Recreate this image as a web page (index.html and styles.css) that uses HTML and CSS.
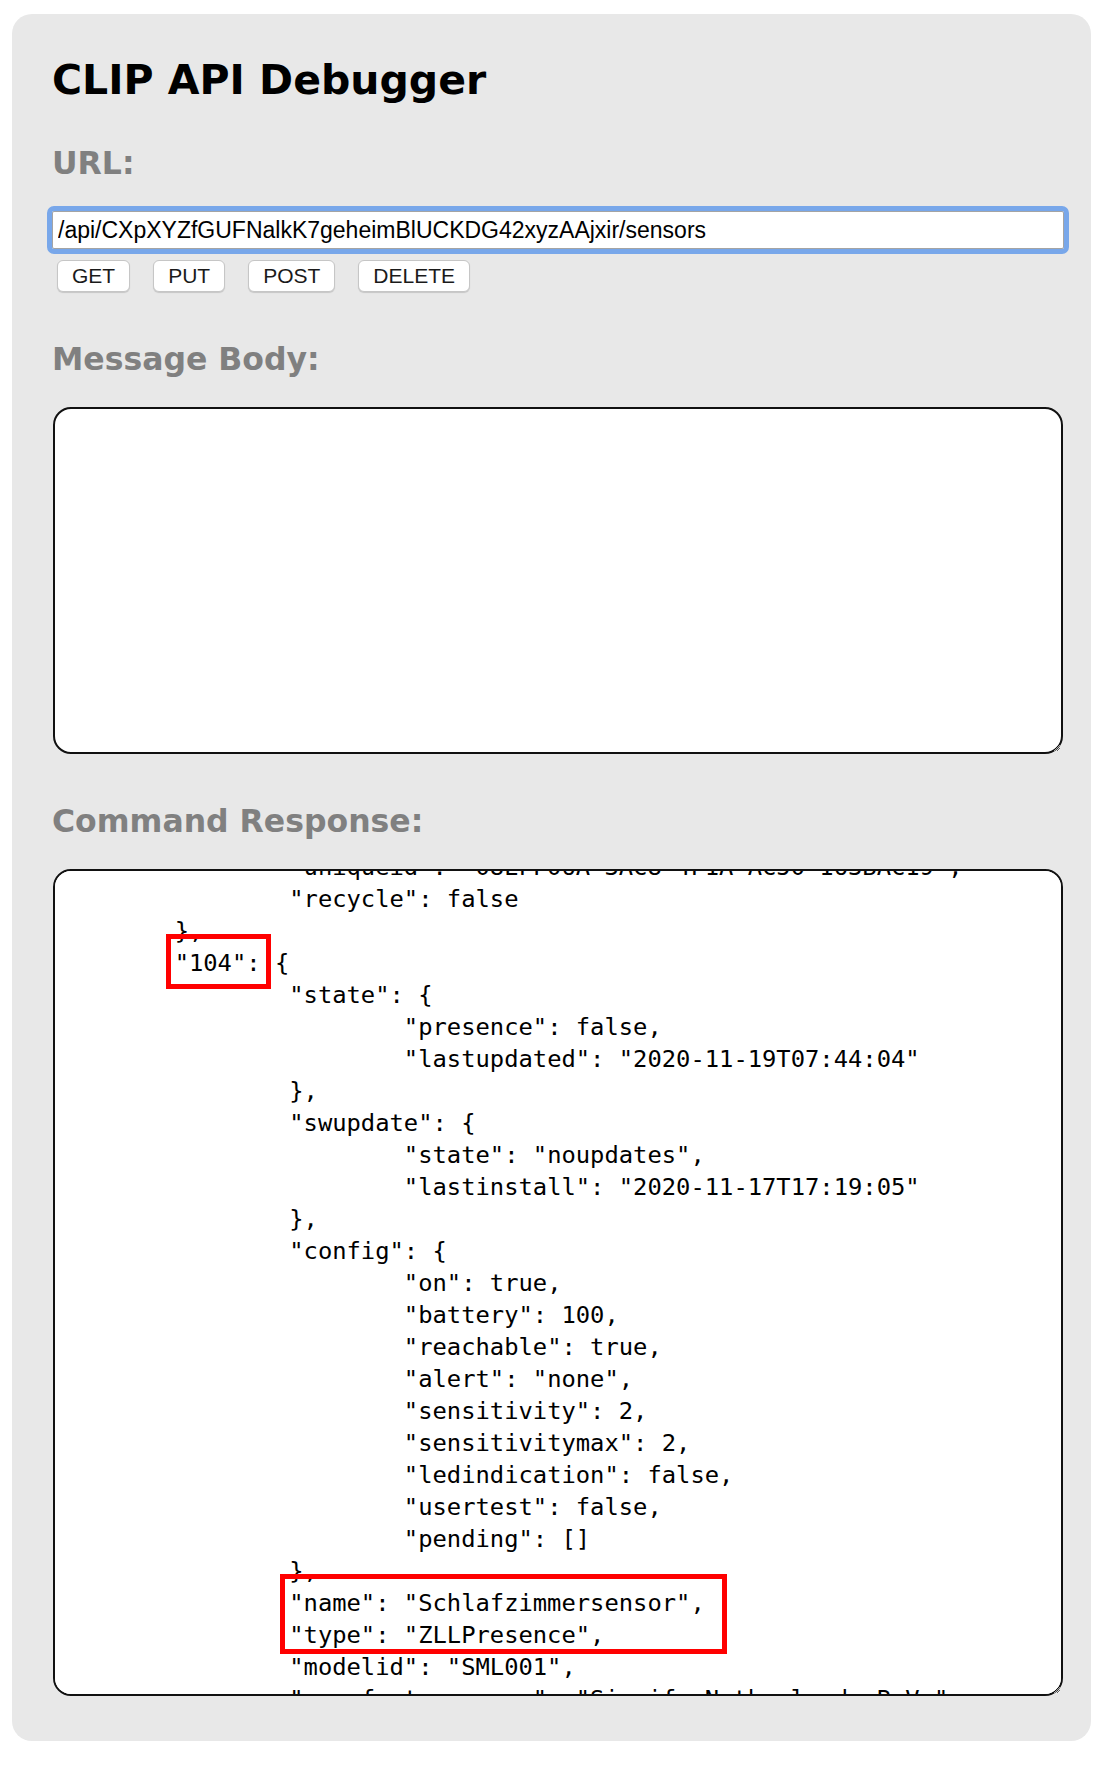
FILE: index.html
```html
<!DOCTYPE html>
<html lang="en">
<head>
  <meta charset="UTF-8">
  <meta name="viewport" content="width=device-width, initial-scale=1.0">
  <title>CLIP API Debugger</title>
  <link rel="stylesheet" href="styles.css">
</head>
<body>

<div class="panel">
  <h1>CLIP API Debugger</h1>

  <h2 class="section-title first">URL:</h2>
  <input type="text" id="commandurl" class="url-input" value="/api/CXpXYZfGUFNalkK7geheimBlUCKDG42xyzAAjxir/sensors">
  <div class="methods">
    <button class="method">GET</button>
    <button class="method">PUT</button>
    <button class="method">POST</button>
    <button class="method">DELETE</button>
  </div>

  <h2 class="section-title">Message Body:</h2>
  <textarea id="messagebody" class="code-box body-box"></textarea>

  <h2 class="section-title">Command Response:</h2>
  <div class="response-wrap">
    <textarea id="response" class="code-box response-box" readonly></textarea>
    <!-- Markierungen aus dem Screenshot -->
    <span class="mark mark-id"></span>
    <span class="mark mark-name"></span>
  </div>
</div>

<script>
  // Antwort der Bridge (gekürzt)
  const sensors = {
    "1": {
      "state": { "daylight": true, "lastupdated": "2020-11-19T06:58:00" },
      "config": { "on": true, "configured": true, "sunriseoffset": 30, "sunsetoffset": -30 },
      "name": "Daylight",
      "type": "Daylight",
      "modelid": "PHDL00",
      "manufacturername": "Signify Netherlands B.V.",
      "swversion": "1.0"
    },
    "103": {
      "state": { "status": 0, "lastupdated": "2020-11-18T21:00:00" },
      "config": { "on": true, "reachable": true },
      "name": "Schlafzimmer Status",
      "type": "CLIPGenericStatus",
      "modelid": "GenericCLIP",
      "manufacturername": "Philips",
      "swversion": "1.0",
      "uniqueid": "08EFF06A-3AC8-4F1A-AC50-163BAC19",
      "recycle": false
    },
    "104": {
      "state": { "presence": false, "lastupdated": "2020-11-19T07:44:04" },
      "swupdate": { "state": "noupdates", "lastinstall": "2020-11-17T17:19:05" },
      "config": {
        "on": true,
        "battery": 100,
        "reachable": true,
        "alert": "none",
        "sensitivity": 2,
        "sensitivitymax": 2,
        "ledindication": false,
        "usertest": false,
        "pending": []
      },
      "name": "Schlafzimmersensor",
      "type": "ZLLPresence",
      "modelid": "SML001",
      "manufacturername": "Signify Netherlands B.V.",
      "productname": "Hue motion sensor",
      "swversion": "6.1.1.27575",
      "uniqueid": "00:17:88:01:08:3a:c8:4f-02-0406",
      "capabilities": { "certified": true, "primary": true }
    },
    "105": {
      "state": { "lightlevel": 0, "dark": true, "daylight": false, "lastupdated": "2020-11-19T07:40:12" },
      "config": { "on": true, "battery": 100, "reachable": true },
      "name": "Hue ambient light sensor 1",
      "type": "ZLLLightLevel",
      "modelid": "SML001"
    }
  };

  const response = document.getElementById('response');
  const text = JSON.stringify(sensors, null, '\t');
  response.value = text;

  // so scrollen, dass "104" wie im Original steht
  const row = text.split('\n').findIndex(line => line.startsWith('\t"104"'));
  response.scrollTop = 2 + 32 * (row - 3) + 20;
</script>

</body>
</html>
```

FILE: styles.css
```css
* {
  box-sizing: border-box;
}

body {
  margin: 0;
  background: #ffffff;
  font-family: "Liberation Sans", Arial, sans-serif;
}

.panel {
  width: 1079px;
  margin: 14px 0 26px 12px;
  padding: 42px 27px 45px 40px;
  background: #e8e8e8;
  border-radius: 20px;
}

h1 {
  margin: 0;
  font-family: Verdana, "DejaVu Sans", sans-serif;
  font-size: 41px;
  line-height: 48px;
  font-weight: bold;
  color: #000;
}

.section-title {
  margin: 47px 0 28px;
  font-family: Verdana, "DejaVu Sans", sans-serif;
  font-size: 31.5px;
  line-height: 40px;
  font-weight: bold;
  color: #808080;
}
.section-title.first {
  margin-top: 39px;
}

.url-input {
  display: block;
  width: 100%;
  height: 38px;
  margin: 0;
  padding: 1px 5px 0;
  border: 1px solid #a4a4a4;
  border-radius: 2px;
  outline: 5px solid #78a7ea;
  background: #fff;
  color: #000;
  font-family: "Liberation Sans", Arial, sans-serif;
  font-size: 23px;
}

.methods {
  display: flex;
  gap: 23px;
  margin-top: 11px;
  padding-left: 5px;
}

.method {
  height: 32px;
  margin: 0;
  padding: 0 14px;
  border: 1px solid #c6c6c6;
  border-radius: 6px;
  background: #fff;
  box-shadow: 0 1px 1px rgba(0,0,0,0.15);
  color: #1a1a1a;
  font-family: "Liberation Sans", Arial, sans-serif;
  font-size: 21px;
}

.code-box {
  display: block;
  width: 1010px;
  margin: 0 1px;
  padding: 2px 5px;
  border: 2px solid #111;
  border-radius: 18px;
  background: #fff;
  color: #000;
  font-family: "DejaVu Sans Mono", monospace;
  font-size: 23.8px;
  line-height: 32px;
  tab-size: 8;
  scrollbar-width: none;
}
.code-box::-webkit-scrollbar {
  width: 0;
  height: 0;
}

.body-box {
  height: 347px;
}

.response-wrap {
  position: relative;
}

.response-box {
  height: 827px;
}

.mark {
  position: absolute;
  border: 5px solid #ff0000;
  pointer-events: none;
}
.mark-id {
  left: 114px;
  top: 65px;
  width: 105px;
  height: 55px;
}
.mark-name {
  left: 228px;
  top: 705px;
  width: 447px;
  height: 80px;
}
```
